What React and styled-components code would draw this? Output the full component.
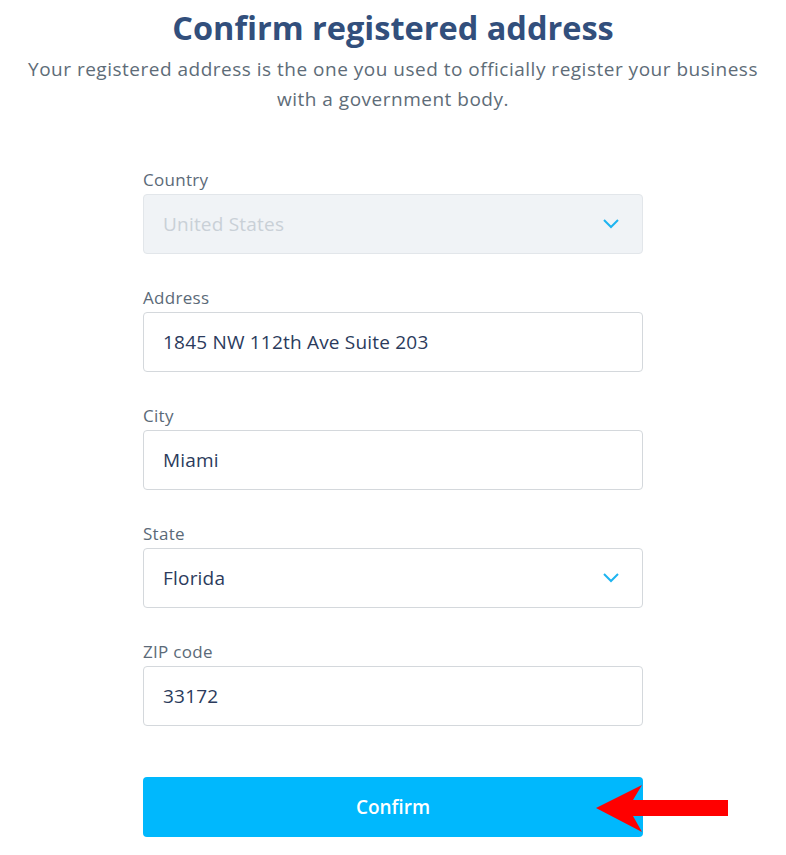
import styled, { createGlobalStyle } from 'styled-components';

const GlobalStyle = createGlobalStyle`
  body {
    margin: 0;
    background: #ffffff;
    font-family: "Open Sans", Lato, sans-serif;
  }
`;

const Page = styled.div`
  width: 786px;
  display: flex;
  flex-direction: column;
  align-items: center;
  padding-top: 6px;
`;

const Title = styled.h1`
  margin: 0;
  font-size: 32.5px;
  font-weight: 700;
  color: #324f7c;
  line-height: 44px;
`;

const Subtitle = styled.p`
  margin: 4px 0 0;
  width: 786px;
  text-align: center;
  font-size: 19px;
  letter-spacing: 0.5px;
  line-height: 30px;
  color: #5e6c78;
`;

const Form = styled.form`
  width: 500px;
  margin-top: 56px;
  display: flex;
  flex-direction: column;
  gap: 34px;
`;

const Field = styled.div`
  display: flex;
  flex-direction: column;
  gap: 4px;
`;

const Label = styled.label`
  font-size: 17px;
  letter-spacing: 0.3px;
  line-height: 20px;
  color: #5b6a78;
`;

const Box = styled.div`
  box-sizing: border-box;
  height: 60px;
  border: 1px solid ${p => (p.disabled ? '#e2e6ea' : '#d4d8dc')};
  border-radius: 4px;
  background: ${p => (p.disabled ? '#f0f3f6' : '#ffffff')};
  display: flex;
  align-items: center;
  justify-content: space-between;
  padding: 0 20px 0 19px;
  font-size: 19px;
  letter-spacing: 0.2px;
  color: ${p => (p.disabled ? '#c9d0d7' : '#2b3b5c')};
`;

const Chevron = styled.svg`
  width: 18px;
  height: 12px;
  margin-right: 2px;
`;

const ButtonWrap = styled.div`
  position: relative;
  margin-top: 17px;
`;

const ConfirmButton = styled.button`
  width: 100%;
  height: 60px;
  border: none;
  border-radius: 4px;
  background: #00b8fd;
  color: #ffffff;
  font-family: "Open Sans", Lato, sans-serif;
  font-size: 19px;
  font-weight: 600;
`;

// red pointer drawn over the button
const Arrow = styled.svg`
  position: absolute;
  left: 453px;
  top: 7px;
  width: 132px;
  height: 49px;
`;

function DownIcon() {
  return (
    <Chevron viewBox="0 0 18 12">
      <path d="M2 2l7 7 7-7" fill="none" stroke="#1eb4f0" strokeWidth="2" />
    </Chevron>
  );
}

export default function App() {
  return (
    <>
      <GlobalStyle />
      <Page>
        <Title>Confirm registered address</Title>
        <Subtitle>
          Your registered address is the one you used to officially register your business
          <br />
          with a government body.
        </Subtitle>
        <Form>
          <Field>
            <Label>Country</Label>
            <Box disabled>
              United States
              <DownIcon />
            </Box>
          </Field>
          <Field>
            <Label>Address</Label>
            <Box>1845 NW 112th Ave Suite 203</Box>
          </Field>
          <Field>
            <Label>City</Label>
            <Box>Miami</Box>
          </Field>
          <Field>
            <Label>State</Label>
            <Box>
              Florida
              <DownIcon />
            </Box>
          </Field>
          <Field>
            <Label>ZIP code</Label>
            <Box>33172</Box>
          </Field>
          <ButtonWrap>
            <ConfirmButton type="button">Confirm</ConfirmButton>
            <Arrow viewBox="0 0 132 49">
              <polygon points="0,24 46,1 37,16 132,16 132,32 37,32 46,48" fill="#ff0000" />
            </Arrow>
          </ButtonWrap>
        </Form>
      </Page>
    </>
  );
}
